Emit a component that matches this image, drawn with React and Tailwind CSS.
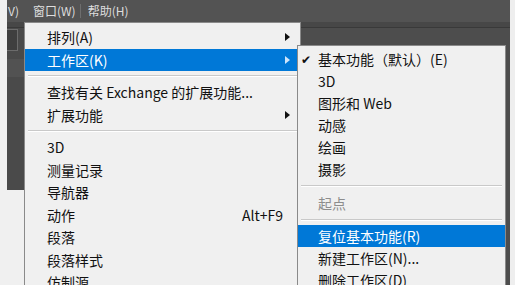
const font = "font-['Noto_Sans_CJK_SC','Noto_Sans',sans-serif]";

function Arrow({ light }) {
  return (
    <svg width="5" height="8" viewBox="0 0 5 8" className="shrink-0">
      <path d="M0 0 L5 4 L0 8 Z" fill={light ? "#cfe4fa" : "#111"} />
    </svg>
  );
}

function Sep({ h = "h-[10px]" }) {
  return (
    <div className={`${h} flex flex-col justify-center px-[3px]`}>
      <div className="h-px bg-[#c9c9c9]" />
      <div className="h-px bg-white" />
    </div>
  );
}

function MainItem({ label, active, arrow, shortcut }) {
  return (
    <div
      className={`flex h-[22.5px] items-center justify-between pl-[22px] ${
        active ? "bg-[#0078d7] text-white" : "text-[#111]"
      } ${arrow ? "pr-[10px]" : "pr-[17px]"}`}
    >
      <span className="leading-none">{label}</span>
      {arrow && <Arrow light={active} />}
      {shortcut && <span className="leading-none">{shortcut}</span>}
    </div>
  );
}

function SubItem({ label, checked, active, muted }) {
  return (
    <div
      className={`flex h-[22px] items-center ${
        active ? "bg-[#0078d7] text-white" : muted ? "text-[#8d8d8d]" : "text-[#111]"
      }`}
    >
      <span className="w-[20px] pl-[3px] text-[12px] leading-none">{checked ? "✔" : ""}</span>
      <span className="leading-none">{label}</span>
    </div>
  );
}

export default function App() {
  return (
    <div className={`relative flex h-[285px] w-[515px] overflow-hidden bg-[#efefef] ${font}`}>
      <div className="w-[7px] shrink-0 bg-[#f0f0f0]" />

      <div className="flex w-[503px] shrink-0 flex-col bg-[#4a4a4a]">
        <div className="flex h-[22px] items-center bg-[#535353] text-[12px] text-[#dedede]">
          <span className="ml-[1px] leading-none">V)</span>
          <span className="ml-[14px] leading-none">窗口(W)</span>
          <span className="ml-[4px] h-[14px] w-px bg-[#6e6e6e]" />
          <span className="ml-[7px] leading-none">帮助(H)</span>
        </div>
        <div className="h-[6px] border-b border-[#393939] bg-[#474747]" />
        <div className="flex flex-1">
          <div className="flex w-[17px] flex-col">
            <div className="mt-[1px] h-[22px] w-[11px] border border-l-0 border-[#6c6c6c] bg-[#3f3f3f]" />
            <div className="mt-[8px] h-[18px] bg-[#525252]" />
            <div className="h-[113px] bg-[#4a4a4a]" />
            <div className="flex-1 bg-[#f0f0f0]" />
          </div>
          <div className="flex-1 bg-[#4d4d4d]" />
        </div>
      </div>

      <div className="w-[5px] shrink-0 bg-[#eeeeee]" />

      {/* main menu */}
      <div className="absolute left-[24px] top-[22px] h-[280px] w-[277px] border border-[#8a8a8a] bg-[#f0f0f0] pt-[3px] text-[14px]">
        <MainItem label="排列(A)" arrow />
        <MainItem label="工作区(K)" arrow active />
        <Sep />
        <MainItem label="查找有关 Exchange 的扩展功能..." />
        <MainItem label="扩展功能" arrow />
        <Sep />
        <MainItem label="3D" />
        <MainItem label="测量记录" />
        <MainItem label="导航器" />
        <MainItem label="动作" shortcut="Alt+F9" />
        <MainItem label="段落" />
        <MainItem label="段落样式" />
        <MainItem label="仿制源" />
      </div>

      {/* submenu */}
      <div className="absolute left-[297px] top-[45px] h-[260px] w-[209px] border border-[#8a8a8a] bg-[#f0f0f0] pt-[2px] text-[14px]">
        <SubItem label="基本功能（默认）(E)" checked />
        <SubItem label="3D" />
        <SubItem label="图形和 Web" />
        <SubItem label="动感" />
        <SubItem label="绘画" />
        <SubItem label="摄影" />
        <Sep h="h-[12px]" />
        <SubItem label="起点" muted />
        <Sep h="h-[11px]" />
        <SubItem label="复位基本功能(R)" active />
        <SubItem label="新建工作区(N)..." />
        <SubItem label="删除工作区(D)" />
      </div>
    </div>
  );
}
